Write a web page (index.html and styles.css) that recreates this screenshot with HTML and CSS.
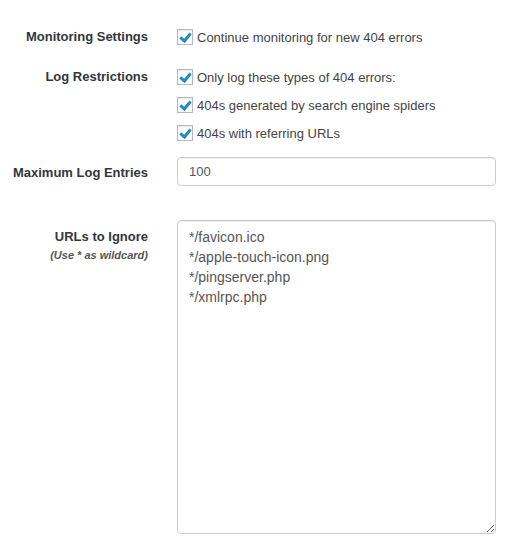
FILE: index.html
```
<!DOCTYPE html>
<html lang="en">
<head>
    <meta charset="UTF-8">
    <title>404 Monitor Settings</title>
    <link rel="stylesheet" href="styles.css">
</head>
<body>

<form class="settings">
    <!-- Monitoring -->
    <div class="row row-monitor">
        <div class="row-label">Monitoring Settings</div>
        <div class="row-field">
            <label class="check"><input type="checkbox" checked><span>Continue monitoring for new 404 errors</span></label>
        </div>
    </div>

    <!-- Restrictions -->
    <div class="row row-restrict">
        <div class="row-label">Log Restrictions</div>
        <div class="row-field">
            <label class="check"><input type="checkbox" checked><span>Only log these types of 404 errors:</span></label>
            <label class="check"><input type="checkbox" checked><span>404s generated by search engine spiders</span></label>
            <label class="check"><input type="checkbox" checked><span>404s with referring URLs</span></label>
        </div>
    </div>

    <!-- Max entries -->
    <div class="row row-max">
        <div class="row-label label-input">Maximum Log Entries</div>
        <div class="row-field">
            <input type="text" class="text-input" value="100">
        </div>
    </div>

    <!-- Ignore list -->
    <div class="row row-ignore">
        <div class="row-label label-area">URLs to Ignore
            <small class="hint">(Use * as wildcard)</small>
        </div>
        <div class="row-field">
            <textarea class="text-area">*/favicon.ico
*/apple-touch-icon.png
*/pingserver.php
*/xmlrpc.php</textarea>
        </div>
    </div>
</form>

</body>
</html>
```

FILE: styles.css
```
body {
    margin: 0;
    background: #fff;
    font-family: "Liberation Sans", Arial, sans-serif;
    font-size: 13px;
    color: #444;
}

.settings {
    padding: 23px 14px 0 0;
}

/* each setting is a two column row */
.row {
    display: grid;
    grid-template-columns: 148px 1fr;
    column-gap: 29px;
}

.row-restrict { margin-top: 12px; }
.row-max { margin-top: 10px; }
.row-ignore { margin-top: 32px; }

.row-label {
    text-align: right;
    font-weight: bold;
    color: #32373c;
    line-height: 28px;
}

.label-input { line-height: 30px; padding-top: 1px; }

.label-area {
    line-height: 18px;
    padding-top: 8px;
}

.hint {
    display: block;
    font-size: 11px;
    font-style: italic;
    font-weight: bold;
    color: #555;
    line-height: 18px;
}

/* checkboxes */
.check {
    display: flex;
    align-items: center;
    height: 28px;
    color: #444;
}

.check input {
    -webkit-appearance: none;
    appearance: none;
    width: 16px;
    height: 16px;
    margin: 0 4px 0 0;
    border: 1px solid #b4b9be;
    background: #fff;
    box-shadow: inset 0 1px 2px rgba(0, 0, 0, 0.1);
    position: relative;
}

.check input:checked::after {
    content: "";
    position: absolute;
    left: 4px;
    top: 1px;
    width: 4px;
    height: 8px;
    border: solid #1e8cbe;
    border-width: 0 3px 3px 0;
    transform: rotate(40deg);
}

/* text inputs */
.text-input,
.text-area {
    box-sizing: border-box;
    width: 100%;
    border: 1px solid #ccc;
    border-radius: 4px;
    box-shadow: inset 0 1px 1px rgba(0, 0, 0, 0.075);
    font-family: "Liberation Sans", Arial, sans-serif;
    color: #555;
    margin: 0;
}

.text-input {
    height: 29px;
    padding: 0 11px;
    font-size: 13px;
}

.text-area {
    display: block;
    height: 314px;
    padding: 6px 11px;
    font-size: 14px;
    line-height: 20px;
    resize: vertical;
}
```
